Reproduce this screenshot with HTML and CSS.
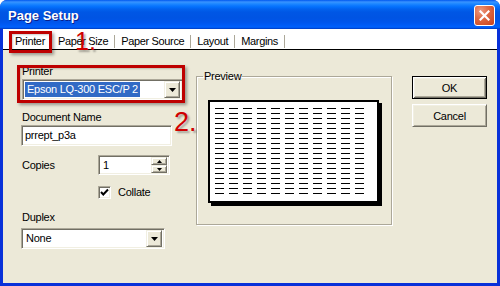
FILE: index.html
```html
<!DOCTYPE html>
<html>
<head>
<meta charset="utf-8">
<title>Page Setup</title>
<link rel="stylesheet" href="styles.css">
</head>
<body>
<div class="window">
  <div class="titlebar">
    <span class="title">Page Setup</span>
    <button class="close" aria-label="Close"><svg width="11" height="11" viewBox="0 0 11 11"><path d="M1.5 1.5 L9.5 9.5 M9.5 1.5 L1.5 9.5" stroke="#fff" stroke-width="2.2" stroke-linecap="square"/></svg></button>
  </div>
  <div class="frame">
    <div class="tabs">
      <span class="tab">Printer</span>
      <span class="tab">Paper Size</span>
      <span class="tab">Paper Source</span>
      <span class="tab">Layout</span>
      <span class="tab">Margins</span>
    </div>
    <div class="content">
      <div class="left">
        <div class="lbl lbl-printer">Printer</div>
        <div class="combo combo-printer">
          <span class="combo-text"><span class="sel">Epson LQ-300 ESC/P 2</span></span>
          <span class="drop"><svg width="7" height="4" viewBox="0 0 7 4"><path d="M0 0 H7 L3.5 4 Z" fill="#000"/></svg></span>
        </div>
        <div class="lbl lbl-doc">Document Name</div>
        <div class="field field-doc">prrept_p3a</div>
        <div class="row-copies">
          <span class="lbl lbl-copies">Copies</span>
          <div class="field spin">
            <span class="spin-val">1</span>
            <span class="spin-btns">
              <span class="spin-btn"><svg width="5" height="3" viewBox="0 0 5 3"><path d="M2.5 0 L5 3 H0 Z" fill="#000"/></svg></span>
              <span class="spin-btn"><svg width="5" height="3" viewBox="0 0 5 3"><path d="M0 0 H5 L2.5 3 Z" fill="#000"/></svg></span>
            </span>
          </div>
        </div>
        <div class="row-collate">
          <span class="check"><svg width="9" height="9" viewBox="0 0 9 9"><path d="M1 4 L3.3 6.5 L8 1.5" fill="none" stroke="#000" stroke-width="2"/></svg></span>
          <span class="collate-text">Collate</span>
        </div>
        <div class="lbl lbl-duplex">Duplex</div>
        <div class="combo combo-duplex">
          <span class="combo-text">None</span>
          <span class="drop"><svg width="7" height="4" viewBox="0 0 7 4"><path d="M0 0 H7 L3.5 4 Z" fill="#000"/></svg></span>
        </div>
      </div>
      <fieldset class="preview">
        <legend>Preview</legend>
        <div class="page"><div class="lines"></div></div>
      </fieldset>
      <div class="buttons">
        <button class="btn btn-default">OK</button>
        <button class="btn">Cancel</button>
      </div>
    </div>
  </div>
  <div class="mark mark-tab"></div>
  <div class="mark mark-printer"></div>
  <div class="num num1">1.</div>
  <div class="num num2">2.</div>
</div>
</body>
</html>
```

FILE: styles.css
```css
html, body {
  margin: 0;
  padding: 0;
  background: #fff;
}
body {
  width: 500px;
  height: 286px;
  overflow: hidden;
  font-family: "Liberation Sans", Arial, sans-serif;
  font-size: 11px;
  letter-spacing: -0.25px;
  color: #000;
}
.window {
  position: relative;
  width: 500px;
  height: 286px;
  display: flex;
  flex-direction: column;
  border-radius: 7px 7px 0 0;
  overflow: hidden;
  background: #0831D9;
}
.titlebar {
  height: 29px;
  flex: none;
  display: flex;
  align-items: center;
  padding: 0 5px 0 8px;
  box-sizing: border-box;
  background: linear-gradient(to bottom, #0058EE 0px, #3A93FF 2px, #288EFF 3px, #127DFF 5px, #036FFC 7px, #0262EE 9px, #0057E5 12px, #0054E3 18px, #0055EB 22px, #005BF5 25px, #0061FC 27px, #0055E8 28px, #0033B5 29px);
}
.title {
  flex: 1;
  font-weight: bold;
  font-size: 13px;
  line-height: 15px;
  letter-spacing: 0;
  padding-top: 2px;
  color: #fff;
  text-shadow: 1px 1px 0 #0A1E8C;
}
.close {
  width: 21px;
  height: 21px;
  margin-top: 1px;
  padding: 0;
  border: 1px solid #fff;
  border-radius: 3px;
  background: radial-gradient(circle at 30% 25%, #EE9A80 0%, #DE6A45 40%, #C8401A 100%);
  display: flex;
  align-items: center;
  justify-content: center;
}
.frame {
  flex: 1;
  display: flex;
  flex-direction: column;
  border: 3px solid #0831D9;
  border-top: 0;
  background: #ECE9D8;
}
.tabs {
  height: 21px;
  box-sizing: border-box;
  padding: 6px 0 0 6px;
  background: #fff;
  border-bottom: 1px solid #000;
  display: flex;
  align-items: flex-start;
  flex: none;
}
.tab {
  line-height: 13px;
  padding: 0 6px;
  letter-spacing: -0.35px;
  border-right: 1px solid #ACA899;
  color: #000;
}
.content {
  flex: 1;
  display: flex;
  align-items: flex-start;
}
.left {
  width: 165px;
  margin-left: 18px;
  margin-top: 15px;
  display: flex;
  flex-direction: column;
  align-items: flex-start;
}
.lbl {
  line-height: 13px;
  margin-left: 1px;
}
.combo, .field {
  box-sizing: border-box;
  background: #fff;
  border-style: solid;
  border-width: 1px;
  border-color: #ACA899 #fff #fff #ACA899;
  box-shadow: inset 1px 1px 0 #716F64, inset -1px -1px 0 #F1EFE2;
  display: flex;
  align-items: center;
}
.combo {
  padding: 2px;
}
.combo-printer {
  margin-top: 1px;
  margin-left: 1px;
  width: 161px;
  height: 21px;
}
.combo-text {
  flex: 1;
  line-height: 13px;
  padding-left: 1px;
  white-space: nowrap;
  overflow: hidden;
}
.sel {
  display: inline-block;
  background: #316AC5;
  color: #fff;
  padding: 1px 2px;
  margin-left: -1px;
}
.drop, .spin-btn {
  box-sizing: border-box;
  background: #ECE9D8;
  border-style: solid;
  border-width: 1px;
  border-color: #F1EFE2 #716F64 #716F64 #F1EFE2;
  box-shadow: inset 1px 1px 0 #fff, inset -1px -1px 0 #ACA899;
  display: flex;
  align-items: center;
  justify-content: center;
}
.drop {
  width: 16px;
  height: 17px;
}
.lbl-doc {
  margin-top: 11px;
}
.field-doc {
  margin-top: 1px;
  width: 151px;
  height: 21px;
  padding: 0 3px;
  line-height: 13px;
}
.row-copies {
  margin-top: 9px;
  display: flex;
  align-items: center;
}
.lbl-copies {
  width: 76px;
}
.spin {
  width: 72px;
  height: 20px;
  padding: 2px;
}
.spin-val {
  flex: 1;
  padding-left: 2px;
  line-height: 13px;
}
.spin-btns {
  display: flex;
  flex-direction: column;
  width: 16px;
  height: 16px;
}
.spin-btn {
  height: 8px;
}
.row-collate {
  margin-top: 11px;
  margin-left: 77px;
  display: flex;
  align-items: center;
}
.check {
  box-sizing: border-box;
  width: 13px;
  height: 13px;
  background: #fff;
  border-style: solid;
  border-width: 1px;
  border-color: #ACA899 #fff #fff #ACA899;
  box-shadow: inset 1px 1px 0 #716F64, inset -1px -1px 0 #F1EFE2;
  display: flex;
  align-items: center;
  justify-content: center;
}
.collate-text {
  margin-left: 7px;
  line-height: 13px;
}
.lbl-duplex {
  margin-top: 12px;
}
.combo-duplex {
  margin-top: 4px;
  width: 144px;
  height: 21px;
}
.combo-duplex .combo-text {
  padding-left: 2px;
}
.preview {
  margin: 20px 0 0 10px;
  padding: 0;
  width: 196px;
  box-sizing: border-box;
  border: 1px solid #ACA899;
  box-shadow: 1px 1px 0 #fff, inset 1px 1px 0 #fff;
}
.preview legend {
  margin-left: 6px;
  padding: 0 1px;
  line-height: 13px;
}
.page {
  margin: 17px 0 21px 11px;
  width: 171px;
  height: 103px;
  box-sizing: border-box;
  background: #fff;
  border: 2px solid #000;
  box-shadow: 3px 3px 0 #000;
}
.lines {
  margin: 6px 0 0 5px;
  width: 149px;
  height: 86px;
  background:
    linear-gradient(to right, transparent 9px, #fff 9px) 0 0 / 14px 5px,
    linear-gradient(to bottom, #000 1px, transparent 1px) 0 0 / 14px 5px;
}
.buttons {
  margin: 26px 10px 0 auto;
  display: flex;
  flex-direction: column;
  gap: 5px;
}
.btn {
  width: 75px;
  height: 23px;
  padding: 0;
  font-family: "Liberation Sans", Arial, sans-serif;
  font-size: 11px;
  letter-spacing: -0.25px;
  color: #000;
  background: #ECE9D8;
  border-style: solid;
  border-width: 1px;
  border-color: #fff #716F64 #716F64 #fff;
  box-shadow: inset 1px 1px 0 #F1EFE2, inset -1px -1px 0 #ACA899;
}
.btn-default {
  border: 1px solid #000;
  box-shadow: inset 1px 1px 0 #fff, inset -1px -1px 0 #716F64, inset 2px 2px 0 #F1EFE2, inset -2px -2px 0 #ACA899;
}
.mark {
  position: absolute;
  box-sizing: border-box;
  border: 3px solid #BE0000;
  box-shadow: 2px 2px 3px rgba(0,0,0,0.35), inset 1px 1px 2px rgba(0,0,0,0.2);
}
.mark-tab {
  left: 9px;
  top: 31px;
  width: 43px;
  height: 22px;
}
.mark-printer {
  left: 17px;
  top: 65px;
  width: 168px;
  height: 38px;
}
.num {
  position: absolute;
  color: #D00000;
  line-height: 1;
  letter-spacing: 0;
  text-shadow: 2px 2px 2px rgba(0,0,0,0.3);
}
.num1 {
  left: 75px;
  top: 29px;
  font-size: 25px;
}
.num2 {
  left: 174px;
  top: 109px;
  font-size: 27px;
}
```
